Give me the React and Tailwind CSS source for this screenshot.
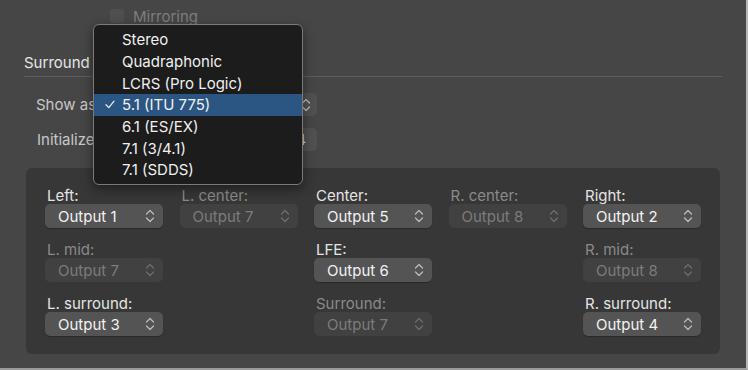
import React from 'react';

const font = { fontFamily: 'Inter, "Liberation Sans", sans-serif' };

const Chevrons = ({ dim }) => (
    <svg width="10" height="16" viewBox="0 0 10 16" fill="none" stroke={dim ? '#6e6e6e' : '#bdbdbd'} strokeWidth="1.2" strokeLinecap="round" strokeLinejoin="round">
        <path d="M1.5 6 L5 2.5 L8.5 6" />
        <path d="M1.5 10 L5 13.5 L8.5 10" />
    </svg>
);

const PopUp = ({ value, dim }) => (
    <div className={`h-6 w-[118px] rounded-[5px] flex items-center justify-between pl-[13px] pr-[8px] ${dim ? 'bg-[#414141] text-[#7c7c7c]' : 'bg-[#545454] text-[#f2f2f2] shadow-[0_1px_1px_rgba(0,0,0,0.25)]'}`}>
        <span className="text-[15px] leading-none">{value}</span>
        <Chevrons dim={dim} />
    </div>
);

const Cell = ({ label, value, dim }) => (
    <div className="flex flex-col">
        <span className={`text-[15px] leading-[15px] h-[15px] mb-[1px] pl-[2px] whitespace-nowrap ${dim ? 'text-[#8a8a8a]' : 'text-[#e4e4e4]'}`}>{label}</span>
        <PopUp value={value} dim={dim} />
    </div>
);

const rows = [
    [
        { label: 'Left:', value: 'Output 1' },
        { label: 'L. center:', value: 'Output 7', dim: true },
        { label: 'Center:', value: 'Output 5' },
        { label: 'R. center:', value: 'Output 8', dim: true },
        { label: 'Right:', value: 'Output 2' },
    ],
    [
        { label: 'L. mid:', value: 'Output 7', dim: true },
        null,
        { label: 'LFE:', value: 'Output 6' },
        null,
        { label: 'R. mid:', value: 'Output 8', dim: true },
    ],
    [
        { label: 'L. surround:', value: 'Output 3' },
        null,
        { label: 'Surround:', value: 'Output 7', dim: true },
        null,
        { label: 'R. surround:', value: 'Output 4' },
    ],
];

const menuItems = ['Stereo', 'Quadraphonic', 'LCRS (Pro Logic)', '5.1 (ITU 775)', '6.1 (ES/EX)', '7.1 (3/4.1)', '7.1 (SDDS)'];

const App = () => {
    return (
        <div style={font} className="relative w-[748px] h-[370px] overflow-hidden bg-[#464646] border-r-2 border-b-2 border-r-[#b8b8b8] border-b-[#9a9a9a]">
            {/* mirroring */}
            <div className="flex items-center gap-[9px] pl-[110px] pt-[8px] h-[24px]">
                <div className="w-[14px] h-[14px] rounded-[3px] bg-[#4f4f4f]" />
                <span className="text-[15px] leading-none text-[#7e7e7e]">Mirroring</span>
            </div>

            {/* heading */}
            <div className="mx-[24px] mt-[31px] pb-[6px] border-b border-[#5e5e5e] w-[698px] text-[15px] leading-[15px]">
                <span className="text-[#e6e6e6]">Surround</span>
            </div>

            <div className="flex items-center h-[23px] mt-[16px] pl-[36px]">
                <span className="whitespace-nowrap text-[15px] leading-none text-[#c8c8c8]">Show as:</span>
                <div className="ml-auto mr-[429px] w-[200px] h-[23px] rounded-[5px] bg-[#515151] flex items-center justify-end pr-[6px]">
                    <Chevrons />
                </div>
            </div>
            <div className="flex items-center h-[23px] mt-[12px] pl-[37px]">
                <span className="whitespace-nowrap text-[15px] leading-none text-[#c8c8c8]">Initialize:</span>
                <div className="ml-auto mr-[429px] w-[200px] h-[23px] rounded-[5px] bg-[#515151] flex items-center justify-end pr-[11px] text-[15px] leading-none text-[#e6e6e6]">
                    4
                </div>
            </div>

            {/* channel panel */}
            <div className="ml-[26px] mt-[17px] w-[694px] h-[186px] rounded-[6px] bg-[#373737] pl-[19px] pt-[20px] flex flex-col gap-[14px]">
                {rows.map((row, i) => (
                    <div key={i} className="grid grid-cols-[118px_118px_118px_118px_118px] gap-x-[16.5px]">
                        {row.map((c, j) => (c ? <Cell key={j} {...c} /> : <div key={j} />))}
                    </div>
                ))}
            </div>

            {/* open menu */}
            <div className="absolute left-[93px] top-[24px] w-[210px] h-[161px] rounded-[6px] bg-[#1c1c1c] border border-[#7a7a7a] shadow-[0_4px_12px_rgba(0,0,0,0.45)] pt-[4px] flex flex-col">
                {menuItems.map(item => {
                    const sel = item === '5.1 (ITU 775)';
                    return (
                        <div key={item} className={`h-[21.7px] flex items-center text-[15px] leading-none text-[#f0f0f0] ${sel ? 'bg-[#2b5683]' : ''}`}>
                            <span className="w-[28px] flex justify-center pl-[4px]">
                                {sel && (
                                    <svg width="10" height="9" viewBox="0 0 10 9" fill="none" stroke="#e8e8e8" strokeWidth="1.3" strokeLinecap="round" strokeLinejoin="round">
                                        <path d="M1 4.8 L3.8 7.6 L9 1.2" />
                                    </svg>
                                )}
                            </span>
                            <span>{item}</span>
                        </div>
                    );
                })}
            </div>
        </div>
    );
};

export default App;
